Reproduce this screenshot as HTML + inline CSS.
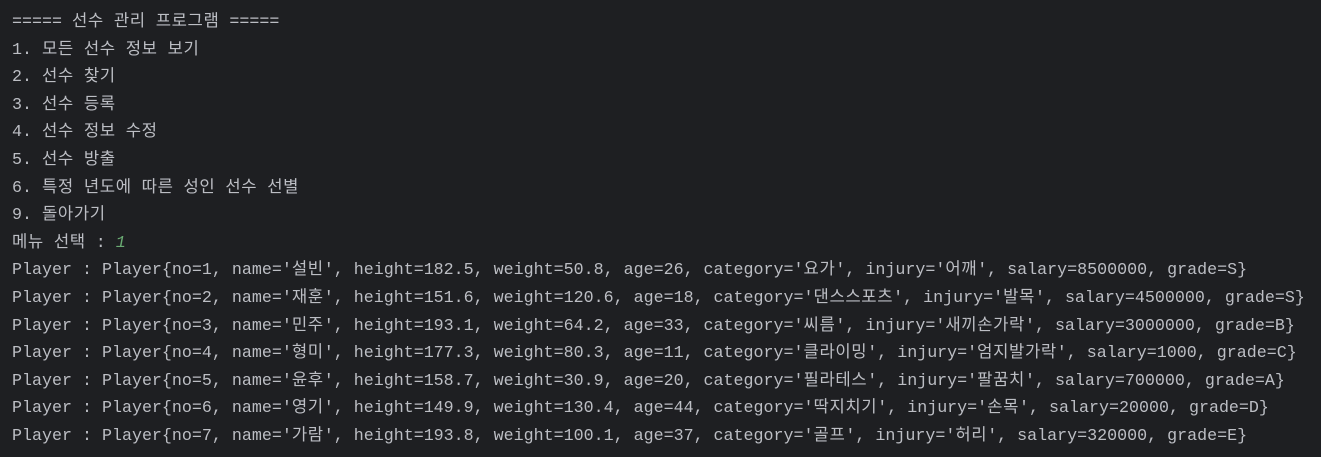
<!DOCTYPE html>
<html><head><meta charset="utf-8"><style>
html,body{margin:0;padding:0;background:#1e1f22;width:1321px;height:457px;overflow:hidden}
pre{margin:0;padding:9px 0 0 12px;font-family:"Liberation Mono","Noto Sans CJK KR",monospace;font-size:16.67px;line-height:27.6px;color:#bcbec4}
.g{color:#6aab73;font-style:italic}
k{letter-spacing:0.6px}
</style></head><body><pre>===== <k>선수</k> <k>관리</k> <k>프로그램</k> =====
1. <k>모든</k> <k>선수</k> <k>정보</k> <k>보기</k>
2. <k>선수</k> <k>찾기</k>
3. <k>선수</k> <k>등록</k>
4. <k>선수</k> <k>정보</k> <k>수정</k>
5. <k>선수</k> <k>방출</k>
6. <k>특정</k> <k>년도에</k> <k>따른</k> <k>성인</k> <k>선수</k> <k>선별</k>
9. <k>돌아가기</k>
<k>메뉴</k> <k>선택</k> : <span class="g">1</span>
Player : Player{no=1, name='<k>설빈</k>', height=182.5, weight=50.8, age=26, category='<k>요가</k>', injury='<k>어깨</k>', salary=8500000, grade=S}
Player : Player{no=2, name='<k>재훈</k>', height=151.6, weight=120.6, age=18, category='<k>댄스스포츠</k>', injury='<k>발목</k>', salary=4500000, grade=S}
Player : Player{no=3, name='<k>민주</k>', height=193.1, weight=64.2, age=33, category='<k>씨름</k>', injury='<k>새끼손가락</k>', salary=3000000, grade=B}
Player : Player{no=4, name='<k>형미</k>', height=177.3, weight=80.3, age=11, category='<k>클라이밍</k>', injury='<k>엄지발가락</k>', salary=1000, grade=C}
Player : Player{no=5, name='<k>윤후</k>', height=158.7, weight=30.9, age=20, category='<k>필라테스</k>', injury='<k>팔꿈치</k>', salary=700000, grade=A}
Player : Player{no=6, name='<k>영기</k>', height=149.9, weight=130.4, age=44, category='<k>딱지치기</k>', injury='<k>손목</k>', salary=20000, grade=D}
Player : Player{no=7, name='<k>가람</k>', height=193.8, weight=100.1, age=37, category='<k>골프</k>', injury='<k>허리</k>', salary=320000, grade=E}</pre></body></html>
